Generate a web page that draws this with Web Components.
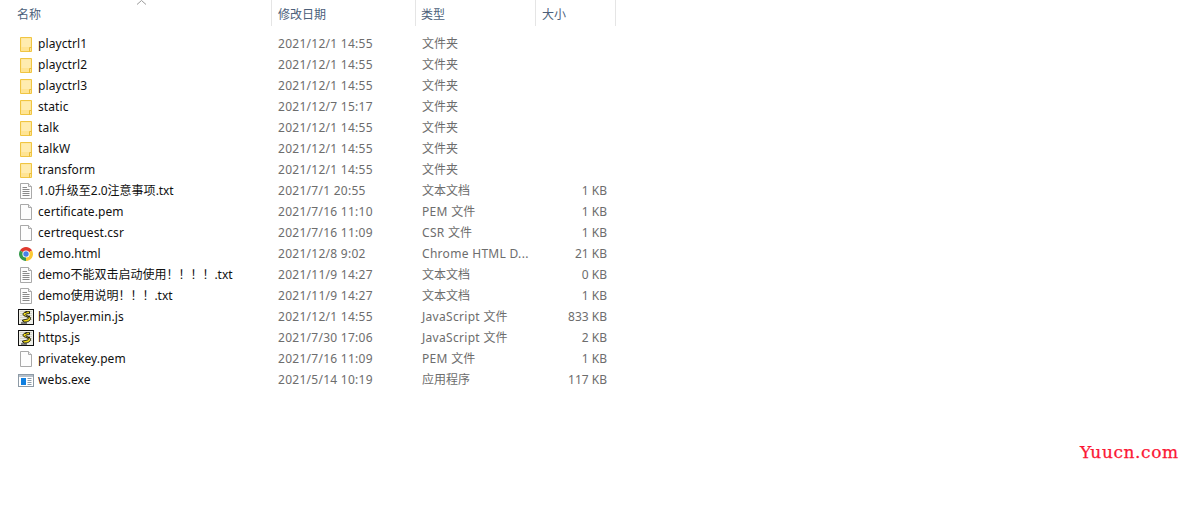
<!DOCTYPE html>
<html lang="zh"><head><meta charset="utf-8"><title>Explorer</title>
<style>
html,body{margin:0;background:#fff;}
body{width:1190px;height:506px;position:relative;overflow:hidden;font:12px "Noto Sans","Noto Sans CJK SC",sans-serif;}
</style></head><body>
<file-list>
<list-header></list-header>
<file-row icon="folder" name="playctrl1" date="2021/12/1 14:55" type="文件夹"></file-row>
<file-row icon="folder" name="playctrl2" date="2021/12/1 14:55" type="文件夹"></file-row>
<file-row icon="folder" name="playctrl3" date="2021/12/1 14:55" type="文件夹"></file-row>
<file-row icon="folder" name="static" date="2021/12/7 15:17" type="文件夹"></file-row>
<file-row icon="folder" name="talk" date="2021/12/1 14:55" type="文件夹"></file-row>
<file-row icon="folder" name="talkW" date="2021/12/1 14:55" type="文件夹"></file-row>
<file-row icon="folder" name="transform" date="2021/12/1 14:55" type="文件夹"></file-row>
<file-row icon="txt" name="1.0升级至2.0注意事项.txt" date="2021/7/1 20:55" type="文本文档" size="1 KB"></file-row>
<file-row icon="blank" name="certificate.pem" date="2021/7/16 11:10" type="PEM 文件" size="1 KB"></file-row>
<file-row icon="blank" name="certrequest.csr" date="2021/7/16 11:09" type="CSR 文件" size="1 KB"></file-row>
<file-row icon="chrome" name="demo.html" date="2021/12/8 9:02" type="Chrome HTML D..." size="21 KB"></file-row>
<file-row icon="txt" name="demo不能双击启动使用！！！！.txt" date="2021/11/9 14:27" type="文本文档" size="0 KB"></file-row>
<file-row icon="txt" name="demo使用说明！！！.txt" date="2021/11/9 14:27" type="文本文档" size="1 KB"></file-row>
<file-row icon="js" name="h5player.min.js" date="2021/12/1 14:55" type="JavaScript 文件" size="833 KB"></file-row>
<file-row icon="js" name="https.js" date="2021/7/30 17:06" type="JavaScript 文件" size="2 KB"></file-row>
<file-row icon="blank" name="privatekey.pem" date="2021/7/16 11:09" type="PEM 文件" size="1 KB"></file-row>
<file-row icon="exe" name="webs.exe" date="2021/5/14 10:19" type="应用程序" size="117 KB"></file-row>
</file-list>
<water-mark>Yuucn.com</water-mark>
<script>
const COLS='272px 144px 120px 80px';
const page='<path d="M2.5 .5H10.5L13.5 3.5V15.5H2.5Z" fill="#fdfdfd" stroke="#a9a9a9"/><path d="M10.5 .5V3.5H13.5" fill="#eee" stroke="#a9a9a9"/>';
const ICONS={
folder:'<path d="M2.5 1.5H13.5V15.5H2.5Z" fill="#ffe493" stroke="#f0c542"/><path d="M3.5 2.5H12.5V11H3.5Z" fill="#ffecaf"/><path d="M11.5 15.5V11.5H13.5" fill="none" stroke="#e9bd3c"/>',
blank:page,
txt:page+'<path d="M4.5 4.5H9M4.5 6.5H11.5M4.5 8.5H11.5M4.5 10.5H11.5M4.5 12.5H11.5" stroke="#8a8a8a"/>',
chrome:'<path d="M8 8L1.94 4.5A7 7 0 0 1 14.06 4.5Z" fill="#e0392e"/><path d="M8 8L14.06 4.5A7 7 0 0 1 8 15Z" fill="#fcc934"/><path d="M8 8L8 15A7 7 0 0 1 1.94 4.5Z" fill="#359a4b"/><circle cx="8" cy="8" r="3.6" fill="#fff"/><circle cx="8" cy="8" r="2.7" fill="#4a80e8"/>',
js:'<rect x=".5" y=".5" width="15" height="15" fill="#efefe8" stroke="#111"/><path d="M2 2.5H14M2 4.5H14M2 6.5H14M2 8.5H14M2 10.5H14" stroke="#d4d4ca"/><path d="M11.5 2.5C8.5 2.5 5 3.2 5 5.3C5 7.6 10.5 7.3 10.5 9C10.5 10.5 6.5 10.2 4 11.5L6.5 13C9 13 12.5 12.2 12.5 9.3C12.5 6.8 7.7 7 7.7 5.5C7.7 5 9.8 4.6 11.5 4.6Z" fill="#f2dc1a" stroke="#1e1e0c" stroke-width="1"/><path d="M7 3.5L9 2.5M9.5 8L12 7M3 14H9" stroke="#111"/>',
exe:'<rect x=".5" y="2.5" width="15" height="12" fill="#fff" stroke="#8d9aa6"/><rect x="1" y="3" width="14" height="2" fill="#b6bfc8"/><rect x="3" y="6" width="5" height="7" fill="#0f7fe0"/><path d="M9.5 6.5H13.5M9.5 8.5H13.5M9.5 10.5H13.5M9.5 12.5H13.5" stroke="#8d9aa6"/>'
};
const lat=(s,cls)=>s.replace(/[\x21-\x7e ]+/g,m=>`<span class="${cls}">${m}</span>`);
class FileList extends HTMLElement{constructor(){super();this.attachShadow({mode:'open'}).innerHTML='<style>:host{display:block;width:616px}.r{display:flex;flex-direction:column}</style><div class="r"><slot></slot></div>';}}
class ListHeader extends HTMLElement{constructor(){super();this.attachShadow({mode:'open'}).innerHTML=`<style>
:host{display:grid;grid-template-columns:${COLS};height:26px;margin-bottom:7px;color:#4c607a;font:12px "Noto Sans CJK SC",sans-serif}
.c{border-right:1px solid #e5e5e5;display:flex;align-items:center;padding-left:6px;box-sizing:border-box;height:26px;position:relative}
.c.a{padding-left:17px}
.c.d{padding-left:5px}
svg{position:absolute;left:136px;top:0}
</style><div class="c a">名称<svg width="11" height="5" viewBox="0 0 11 5"><path d="M1 4.5L5.5 .5L10 4.5" fill="none" stroke="#9a9a9a"/></svg></div><div class="c">修改日期</div><div class="c d">类型</div><div class="c">大小</div>`;}}
class FileRow extends HTMLElement{constructor(){super();const g=a=>this.getAttribute(a)||'';const nm=g('name');const plain=/^[\x20-\x7e]+$/.test(nm);this.attachShadow({mode:'open'}).innerHTML=`<style>
:host{display:grid;grid-template-columns:${COLS};height:21px;line-height:21px;align-items:center;font:12px/21px "Noto Sans","Noto Sans CJK SC",sans-serif;color:#6d6d6d;white-space:nowrap}
.n{display:flex;align-items:center;gap:4px;padding-left:18px;color:#111}
svg{width:16px;height:16px;flex:none;display:block}
.d{padding-left:6px;letter-spacing:.27px}.t{padding-left:6px}.s{text-align:right;padding-right:9px}
.ln{letter-spacing:.09px}.lm{letter-spacing:-.05px}.lt{letter-spacing:.3px}
</style><div class="n"><svg viewBox="0 0 16 16">${ICONS[g('icon')]}</svg><span>${lat(nm,plain?'ln':'lm')}</span></div><div class="d">${g('date')}</div><div class="t">${lat(g('type'),'lt')}</div><div class="s">${g('size')}</div>`;}}
class WaterMark extends HTMLElement{constructor(){super();this.attachShadow({mode:'open'}).innerHTML='<style>:host{position:absolute;left:1080px;top:441px;font:17px/22px "DejaVu Serif",serif;letter-spacing:.6px;color:#fb1735;-webkit-text-stroke:.25px #fb1735}</style><slot></slot>';}}
customElements.define('file-list',FileList);customElements.define('list-header',ListHeader);customElements.define('file-row',FileRow);customElements.define('water-mark',WaterMark);
</script>
</body></html>
